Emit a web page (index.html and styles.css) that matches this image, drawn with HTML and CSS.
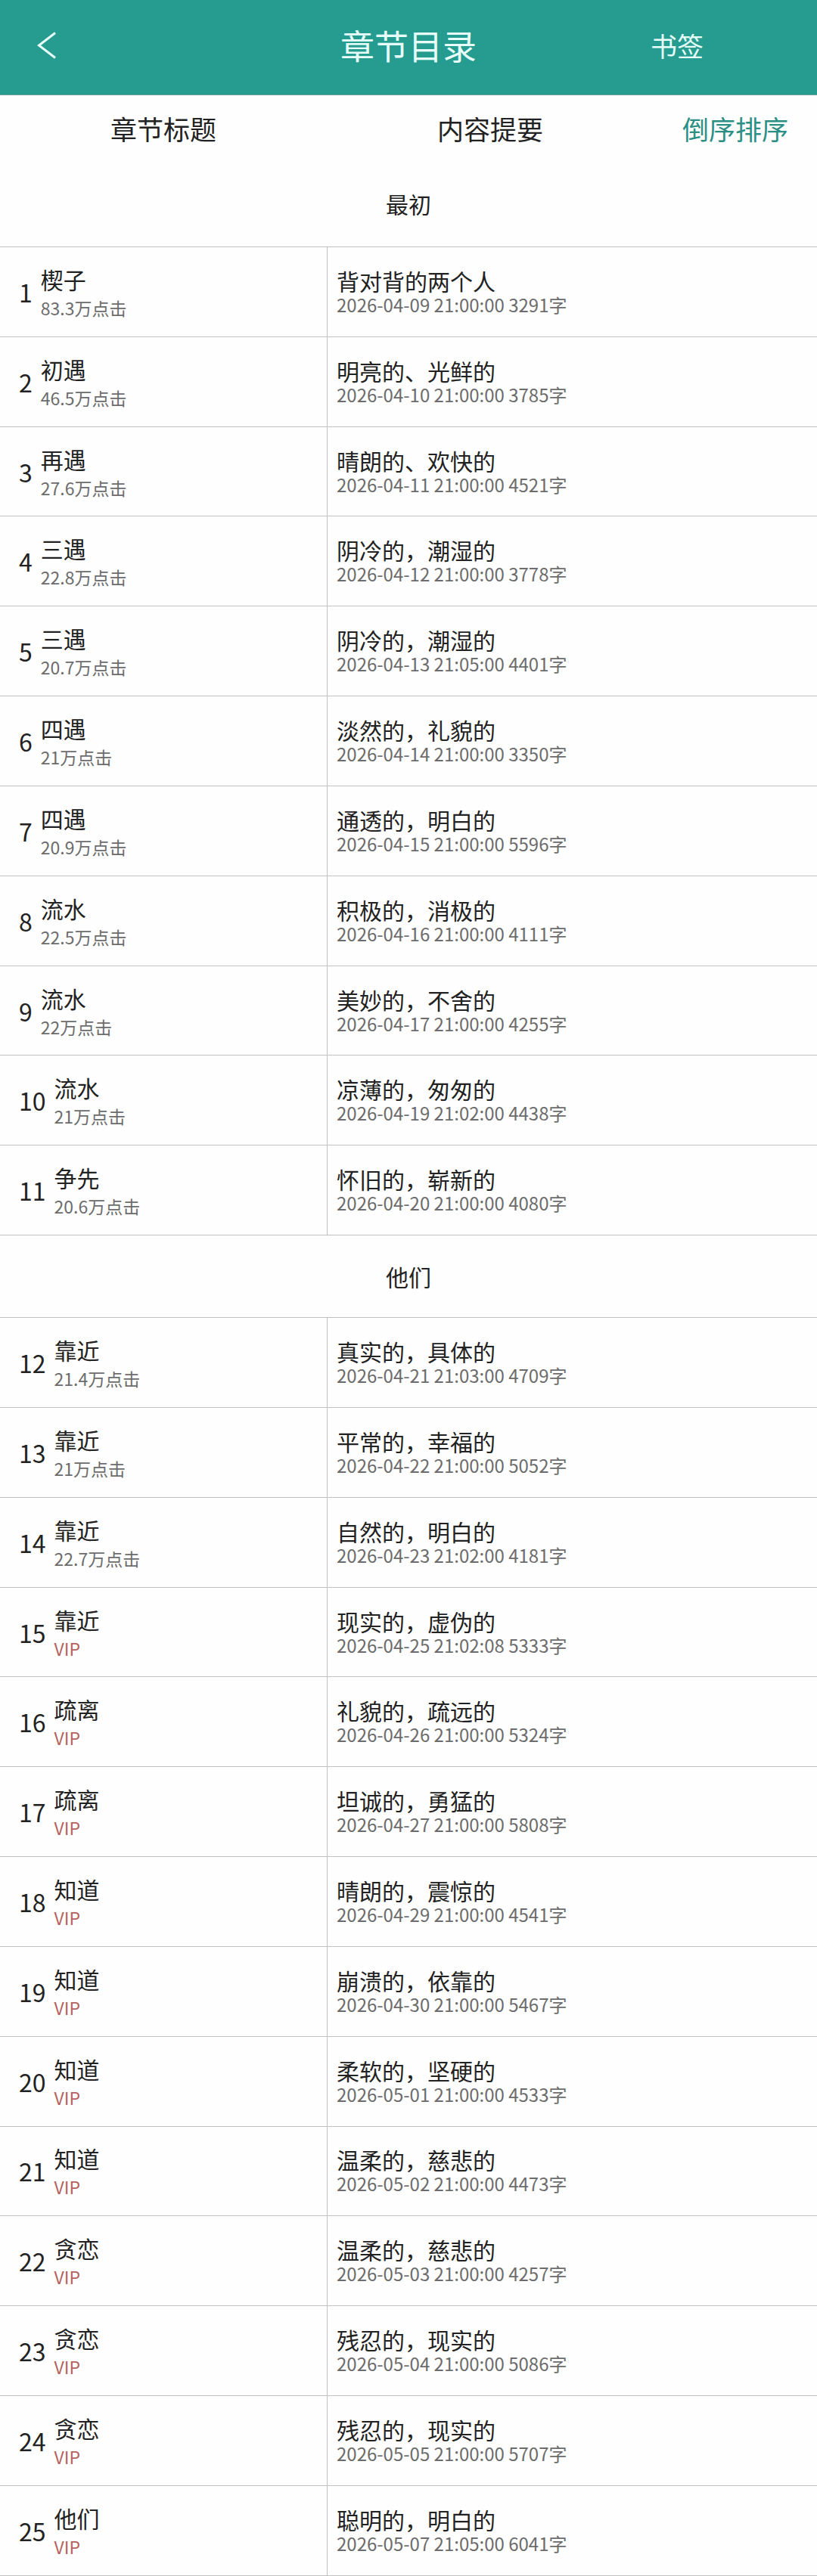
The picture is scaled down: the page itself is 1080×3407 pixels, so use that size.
FILE: index.html
```html
<!DOCTYPE html>
<html lang="zh-CN">
<head>
<meta charset="utf-8">
<meta name="viewport" content="width=device-width, initial-scale=1">
<title>章节目录</title>
<link rel="stylesheet" href="styles.css">
</head>
<body>
<header class="topbar">
  <div class="topbar-side">
    <button class="back" type="button" aria-label="返回">
      <svg viewBox="0 0 26 36" width="26" height="36" aria-hidden="true"><path d="M24 1.500 L2.500 18 L24 34.500"/></svg>
    </button>
  </div>
  <h1 class="topbar-title">章节目录</h1>
  <div class="topbar-side topbar-actions">
    <button class="bookmark" type="button">书签</button>
  </div>
</header>
<table class="chapters">
  <colgroup><col class="col-title"><col class="col-summary"><col class="col-sort"></colgroup>
  <thead>
    <tr class="columns"><th scope="col">章节标题</th><th scope="col">内容提要</th><th><button class="sort" type="button">倒序排序</button></th></tr>
  </thead>
  <tbody>
    <tr class="volume"><th colspan="3">最初</th></tr>
    <tr><td><div class="chapter"><span class="num">1</span><div><a class="name" href="#c1">楔子</a><p class="clicks">83.3万点击</p></div></div></td><td colspan="2"><p class="summary">背对背的两个人</p><p class="meta">2026-04-09 21:00:00 3291字</p></td></tr>
    <tr><td><div class="chapter"><span class="num">2</span><div><a class="name" href="#c2">初遇</a><p class="clicks">46.5万点击</p></div></div></td><td colspan="2"><p class="summary">明亮的、光鲜的</p><p class="meta">2026-04-10 21:00:00 3785字</p></td></tr>
    <tr><td><div class="chapter"><span class="num">3</span><div><a class="name" href="#c3">再遇</a><p class="clicks">27.6万点击</p></div></div></td><td colspan="2"><p class="summary">晴朗的、欢快的</p><p class="meta">2026-04-11 21:00:00 4521字</p></td></tr>
    <tr><td><div class="chapter"><span class="num">4</span><div><a class="name" href="#c4">三遇</a><p class="clicks">22.8万点击</p></div></div></td><td colspan="2"><p class="summary">阴冷的，潮湿的</p><p class="meta">2026-04-12 21:00:00 3778字</p></td></tr>
    <tr><td><div class="chapter"><span class="num">5</span><div><a class="name" href="#c5">三遇</a><p class="clicks">20.7万点击</p></div></div></td><td colspan="2"><p class="summary">阴冷的，潮湿的</p><p class="meta">2026-04-13 21:05:00 4401字</p></td></tr>
    <tr><td><div class="chapter"><span class="num">6</span><div><a class="name" href="#c6">四遇</a><p class="clicks">21万点击</p></div></div></td><td colspan="2"><p class="summary">淡然的，礼貌的</p><p class="meta">2026-04-14 21:00:00 3350字</p></td></tr>
    <tr><td><div class="chapter"><span class="num">7</span><div><a class="name" href="#c7">四遇</a><p class="clicks">20.9万点击</p></div></div></td><td colspan="2"><p class="summary">通透的，明白的</p><p class="meta">2026-04-15 21:00:00 5596字</p></td></tr>
    <tr><td><div class="chapter"><span class="num">8</span><div><a class="name" href="#c8">流水</a><p class="clicks">22.5万点击</p></div></div></td><td colspan="2"><p class="summary">积极的，消极的</p><p class="meta">2026-04-16 21:00:00 4111字</p></td></tr>
    <tr><td><div class="chapter"><span class="num">9</span><div><a class="name" href="#c9">流水</a><p class="clicks">22万点击</p></div></div></td><td colspan="2"><p class="summary">美妙的，不舍的</p><p class="meta">2026-04-17 21:00:00 4255字</p></td></tr>
    <tr><td><div class="chapter"><span class="num">10</span><div><a class="name" href="#c10">流水</a><p class="clicks">21万点击</p></div></div></td><td colspan="2"><p class="summary">凉薄的，匆匆的</p><p class="meta">2026-04-19 21:02:00 4438字</p></td></tr>
    <tr><td><div class="chapter"><span class="num">11</span><div><a class="name" href="#c11">争先</a><p class="clicks">20.6万点击</p></div></div></td><td colspan="2"><p class="summary">怀旧的，崭新的</p><p class="meta">2026-04-20 21:00:00 4080字</p></td></tr>
    <tr class="volume"><th colspan="3">他们</th></tr>
    <tr><td><div class="chapter"><span class="num">12</span><div><a class="name" href="#c12">靠近</a><p class="clicks">21.4万点击</p></div></div></td><td colspan="2"><p class="summary">真实的，具体的</p><p class="meta">2026-04-21 21:03:00 4709字</p></td></tr>
    <tr><td><div class="chapter"><span class="num">13</span><div><a class="name" href="#c13">靠近</a><p class="clicks">21万点击</p></div></div></td><td colspan="2"><p class="summary">平常的，幸福的</p><p class="meta">2026-04-22 21:00:00 5052字</p></td></tr>
    <tr><td><div class="chapter"><span class="num">14</span><div><a class="name" href="#c14">靠近</a><p class="clicks">22.7万点击</p></div></div></td><td colspan="2"><p class="summary">自然的，明白的</p><p class="meta">2026-04-23 21:02:00 4181字</p></td></tr>
    <tr><td><div class="chapter"><span class="num">15</span><div><a class="name" href="#c15">靠近</a><p class="clicks vip">VIP</p></div></div></td><td colspan="2"><p class="summary">现实的，虚伪的</p><p class="meta">2026-04-25 21:02:08 5333字</p></td></tr>
    <tr><td><div class="chapter"><span class="num">16</span><div><a class="name" href="#c16">疏离</a><p class="clicks vip">VIP</p></div></div></td><td colspan="2"><p class="summary">礼貌的，疏远的</p><p class="meta">2026-04-26 21:00:00 5324字</p></td></tr>
    <tr><td><div class="chapter"><span class="num">17</span><div><a class="name" href="#c17">疏离</a><p class="clicks vip">VIP</p></div></div></td><td colspan="2"><p class="summary">坦诚的，勇猛的</p><p class="meta">2026-04-27 21:00:00 5808字</p></td></tr>
    <tr><td><div class="chapter"><span class="num">18</span><div><a class="name" href="#c18">知道</a><p class="clicks vip">VIP</p></div></div></td><td colspan="2"><p class="summary">晴朗的，震惊的</p><p class="meta">2026-04-29 21:00:00 4541字</p></td></tr>
    <tr><td><div class="chapter"><span class="num">19</span><div><a class="name" href="#c19">知道</a><p class="clicks vip">VIP</p></div></div></td><td colspan="2"><p class="summary">崩溃的，依靠的</p><p class="meta">2026-04-30 21:00:00 5467字</p></td></tr>
    <tr><td><div class="chapter"><span class="num">20</span><div><a class="name" href="#c20">知道</a><p class="clicks vip">VIP</p></div></div></td><td colspan="2"><p class="summary">柔软的，坚硬的</p><p class="meta">2026-05-01 21:00:00 4533字</p></td></tr>
    <tr><td><div class="chapter"><span class="num">21</span><div><a class="name" href="#c21">知道</a><p class="clicks vip">VIP</p></div></div></td><td colspan="2"><p class="summary">温柔的，慈悲的</p><p class="meta">2026-05-02 21:00:00 4473字</p></td></tr>
    <tr><td><div class="chapter"><span class="num">22</span><div><a class="name" href="#c22">贪恋</a><p class="clicks vip">VIP</p></div></div></td><td colspan="2"><p class="summary">温柔的，慈悲的</p><p class="meta">2026-05-03 21:00:00 4257字</p></td></tr>
    <tr><td><div class="chapter"><span class="num">23</span><div><a class="name" href="#c23">贪恋</a><p class="clicks vip">VIP</p></div></div></td><td colspan="2"><p class="summary">残忍的，现实的</p><p class="meta">2026-05-04 21:00:00 5086字</p></td></tr>
    <tr><td><div class="chapter"><span class="num">24</span><div><a class="name" href="#c24">贪恋</a><p class="clicks vip">VIP</p></div></div></td><td colspan="2"><p class="summary">残忍的，现实的</p><p class="meta">2026-05-05 21:00:00 5707字</p></td></tr>
    <tr><td><div class="chapter"><span class="num">25</span><div><a class="name" href="#c25">他们</a><p class="clicks vip">VIP</p></div></div></td><td colspan="2"><p class="summary">聪明的，明白的</p><p class="meta">2026-05-07 21:05:00 6041字</p></td></tr>
  </tbody>
</table>
</body>
</html>
```
FILE: styles.css
```css
* {
  box-sizing: border-box;
}

body {
  margin: 0;
  min-height: 100vh;
  display: flex;
  flex-direction: column;
  background: #fefefe;
  color: #222;
  font-family: "Noto Sans CJK SC", sans-serif;
  font-size: 30px;
}

p {
  margin: 0;
}

button {
  padding: 0;
  border: 0;
  background: none;
  font: inherit;
  color: inherit;
  cursor: pointer;
}

.topbar {
  display: grid;
  grid-template-columns: 1fr auto 1fr;
  align-items: center;
  padding-bottom: 6px;
  height: 126px;
  background: #269b8f;
  border-bottom: 1px solid #6f9c94;
  color: #e6fffb;
}

.topbar-side {
  display: flex;
  padding: 0 49px;
}

.topbar-actions {
  justify-content: flex-end;
  padding-right: 150px;
}

.topbar-title {
  margin: 0;
  font-size: 45px;
  font-weight: 400;
  line-height: 60px;
}

.back {
  display: flex;
}

.back svg {
  fill: none;
  stroke: currentColor;
  stroke-width: 3;
}

.bookmark {
  font-size: 35px;
  line-height: 48px;
}

.chapters {
  flex: 1 0 auto;
  width: 100%;
  table-layout: fixed;
  border-collapse: separate;
  border-spacing: 0;
}

.col-title,
.col-summary {
  width: 40%;
}

.col-sort {
  width: 20%;
}

.chapters th {
  padding: 0;
  font-weight: 400;
}

.columns {
  height: 86px;
  font-size: 35px;
}

.sort {
  color: #2c8f83;
}

.volume {
  height: 109px;
}

.volume:first-child {
  height: 115px;
}

.chapters tbody th,
.chapters td {
  border-bottom: 1px solid #c2c2c2;
}

.chapters td {
  padding: 20px 0;
}

.chapters td + td {
  padding-left: 12px;
  border-left: 1px solid #c2c2c2;
}

.chapter {
  display: flex;
  align-items: center;
  gap: 11px;
  padding-left: 25px;
}

.num {
  font-size: 32px;
  line-height: 40px;
}

.name {
  display: block;
  color: inherit;
  line-height: 42px;
  text-decoration: none;
}

.clicks {
  color: #6c6c6c;
  font-size: 23px;
  line-height: 34px;
}

.vip {
  color: #b5625f;
}

.summary {
  line-height: 34px;
}

.meta {
  color: #6c6c6c;
  font-size: 24px;
  line-height: 30px;
}
```
